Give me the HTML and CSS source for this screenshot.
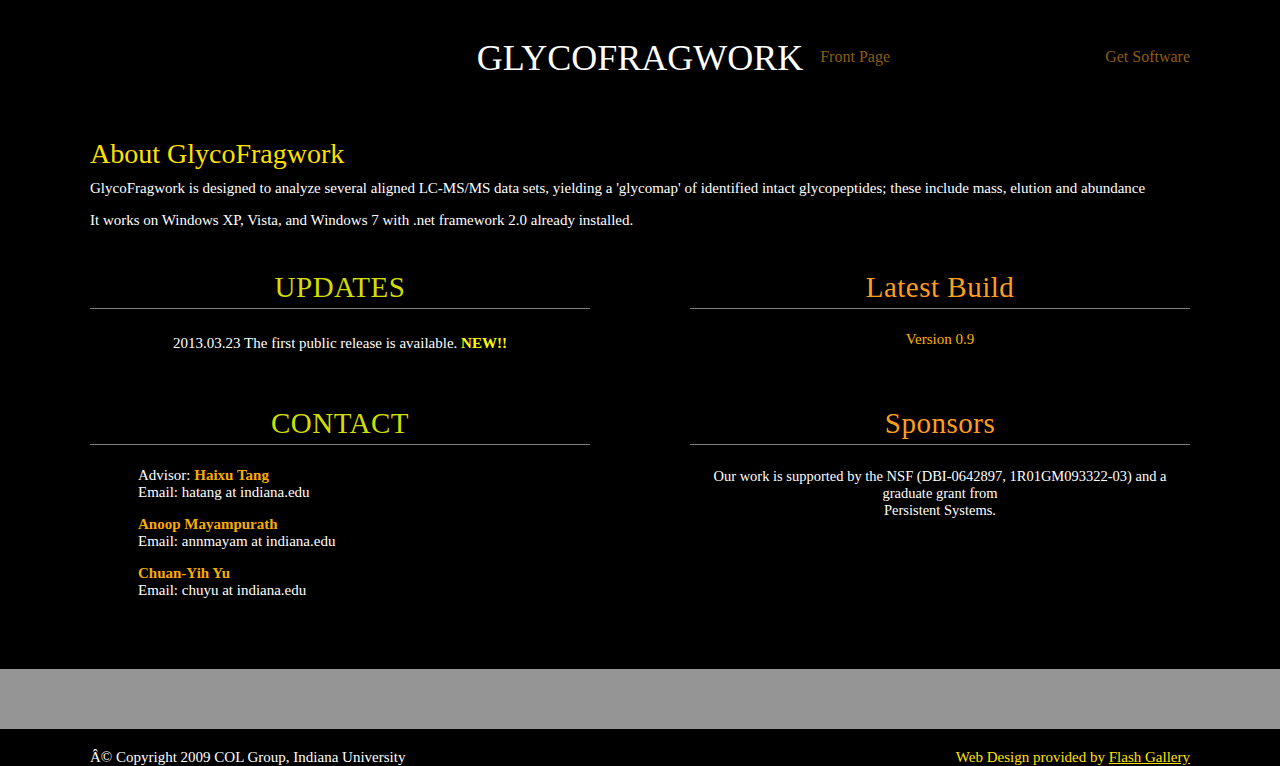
FILE: index.html
```html
<!DOCTYPE html>
<html>
<head>
<meta charset="utf-8">
<title>GlycoFragwork</title>
<link rel="stylesheet" href="styles.css">
</head>
<body>
<div class="page">
  <header class="header">
    <div class="spacer"></div>
    <h1 class="logo">GLYCOFRAGWORK</h1>
    <nav class="nav">
      <a href="#">Front Page</a>
      <a href="#">Get Software</a>
    </nav>
  </header>

  <main class="main">
    <section class="about">
      <h2 class="about-title">About GlycoFragwork</h2>
      <p>GlycoFragwork is designed to analyze several aligned LC-MS/MS data sets, yielding a 'glycomap' of identified intact glycopeptides; these include mass, elution and abundance</p>
      <p>It works on Windows XP, Vista, and Windows 7 with .net framework 2.0 already installed.</p>
    </section>

    <div class="grid">
      <section class="box">
        <h3 class="box-title green">UPDATES</h3>
        <p class="center updates">2013.03.23 The first public release is available. <strong class="new">NEW!!</strong></p>
      </section>
      <section class="box">
        <h3 class="box-title orange">Latest Build</h3>
        <p class="center version">Version 0.9</p>
      </section>
      <section class="box">
        <h3 class="box-title green">CONTACT</h3>
        <div class="contacts">
          <p>Advisor: <strong class="name">Haixu Tang</strong><br>Email: hatang at indiana.edu</p>
          <p><strong class="name">Anoop Mayampurath</strong><br>Email: annmayam at indiana.edu</p>
          <p><strong class="name">Chuan-Yih Yu</strong><br>Email: chuyu at indiana.edu</p>
        </div>
      </section>
      <section class="box">
        <h3 class="box-title orange">Sponsors</h3>
        <p class="center sponsors">Our work is supported by the NSF (DBI-0642897, 1R01GM093322-03) and a graduate grant from<br>Persistent Systems.</p>
      </section>
    </div>
  </main>

  <div class="band"></div>

  <footer class="footer">
    <span>&Acirc;&copy; Copyright 2009 COL Group, Indiana University</span>
    <span class="credit">Web Design provided by <a href="#">Flash Gallery</a></span>
  </footer>
</div>
</body>
</html>
```

FILE: styles.css
```css
html, body {
  margin: 0;
  padding: 0;
  background: #000;
}
body {
  font-family: "Liberation Serif", "Times New Roman", serif;
  color: #fff;
  font-size: 15px;
  line-height: 17px;
}
.page {
  width: 1100px;
  margin: 0 auto;
}
.header {
  display: grid;
  grid-template-columns: 1fr auto 1fr;
  align-items: start;
  padding-top: 38px;
  height: 62px;
}
.logo {
  margin: 0;
  font-weight: normal;
  font-size: 36px;
  line-height: 40px;
  letter-spacing: 0;
  color: #fff;
}
.nav {
  display: flex;
  justify-content: space-between;
  padding-left: 17px;
  padding-top: 10px;
}
.nav a {
  color: #8c5d10;
  text-decoration: none;
  font-size: 16px;
  line-height: 18px;
}
.main {
  padding-top: 38px;
}
.about-title {
  margin: 0;
  font-weight: normal;
  font-size: 28px;
  line-height: 32px;
  color: #ffe000;
}
.about p {
  margin: 10px 0 0 0;
}
.about p + p {
  margin-top: 15px;
}
.grid {
  display: grid;
  grid-template-columns: 500px 500px;
  column-gap: 100px;
  padding-top: 39px;
}
.box {
  min-height: 136px;
}
.box-title {
  margin: 0;
  text-align: center;
  font-weight: normal;
  font-size: 29px;
  line-height: 38px;
  padding-bottom: 2px;
  border-bottom: 1px solid #7d7d7d;
  letter-spacing: 0.5px;
}
.green { color: #d2dc00; }
.orange { color: #ff9e1e; }
.center {
  text-align: center;
  margin: 0;
}
.updates { padding-top: 26px; }
.version {
  padding-top: 22px;
  color: #ffb000;
}
.new {
  color: #ffff00;
}
.contacts {
  padding-left: 48px;
  padding-top: 22px;
}
.contacts p {
  margin: 0 0 15px 0;
}
.name {
  color: #f8ad00;
}
.sponsors {
  padding: 23px 0 0;
  font-size: 14.5px;
}
.band {
  background: #959595;
  height: 60px;
  margin: 55px calc(50% - 640px) 0;
}
.footer {
  display: flex;
  justify-content: space-between;
  padding-top: 20px;
  height: 37px;
}
.credit {
  color: #ffe000;
}
.credit a {
  color: #ffe000;
  text-decoration: underline;
}
```
